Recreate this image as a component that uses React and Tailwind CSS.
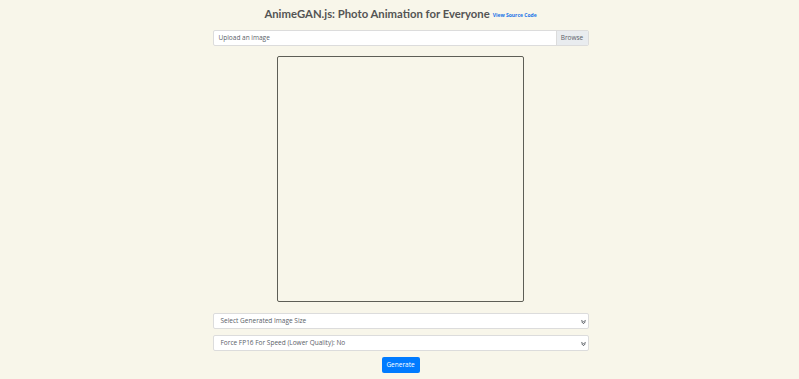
import React from 'react';

const font = { fontFamily: '"Open Sans", "Noto Sans", sans-serif' };

const Chevron = () => (
    <svg width="5" height="5" viewBox="0 0 16 16" className="text-[#343a40]">
        <path d="M2 4l6 6 6-6M2 9l6 6 6-6" fill="none" stroke="currentColor" strokeWidth="2.5" strokeLinecap="round" strokeLinejoin="round" />
    </svg>
);

const SelectBox = ({ label }) => (
    <div className="w-full h-[16px] bg-white border border-[#dcdcdc] rounded-[2px] flex items-center justify-between pl-[7px] pr-[2px] text-[6.5px] text-[#5a6168]">
        <span>{label}</span>
        <Chevron />
    </div>
);

export default function App() {
    return (
        <div className="w-full min-h-[379px] bg-[#f8f6ea] flex flex-col items-center pl-[2px]" style={font}>
            {/* Title */}
            <div className="mt-[6px] flex items-end gap-[3px]">
                <h1 className="text-[11.3px] font-bold text-[#545454] leading-[16px] font-['Lato']">AnimeGAN.js: Photo Animation for Everyone</h1>
                <a className="text-[5px] font-bold text-[#1a73e8] mb-[3px]">View Source Code</a>
            </div>

            {/* Upload */}
            <div className="w-[376px] mt-[8px] h-[16px] flex bg-white border border-[#dcdcdc] rounded-[2px] overflow-hidden">
                <div className="flex-1 pl-[5px] flex items-center text-[6.5px] text-[#5a6168]">Upload an image</div>
                <div className="w-[32px] bg-[#e9ecef] border-l border-[#dcdcdc] flex items-center justify-center text-[6.5px] text-[#5a6168]">Browse</div>
            </div>

            {/* Canvas */}
            <div className="mt-[10px] w-[247px] h-[246px] border border-[#5e5e56] rounded-[2px]" />

            {/* Options */}
            <div className="w-[376px] mt-[11px] flex flex-col gap-[6px]">
                <SelectBox label="Select Generated Image Size" />
                <SelectBox label="Force FP16 For Speed (Lower Quality): No" />
            </div>

            <button className="mt-[6px] w-[38px] h-[16px] bg-[#007bff] text-white text-[6.5px] rounded-[2px] flex items-center justify-center">Generate</button>
        </div>
    );
}
